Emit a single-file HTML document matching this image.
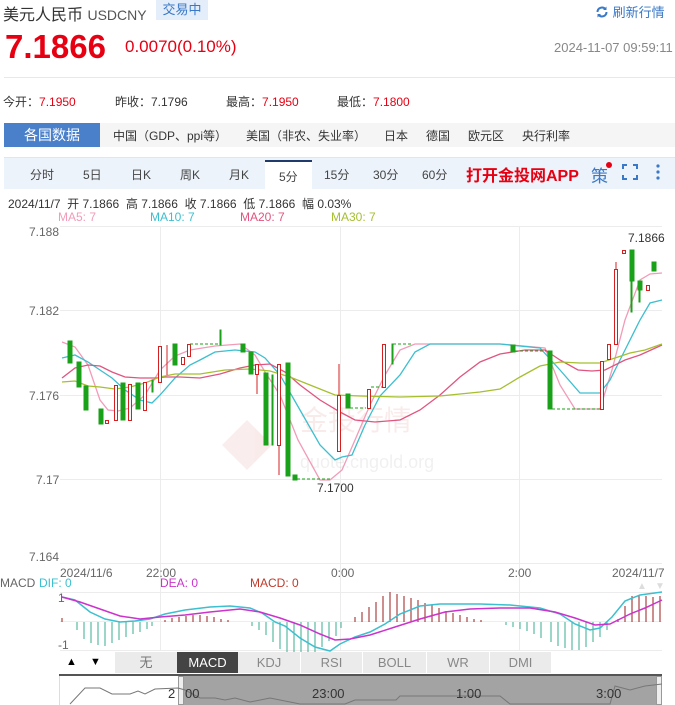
<!DOCTYPE html>
<html><head><meta charset="utf-8"><style>
*{margin:0;padding:0;box-sizing:border-box}
body{width:675px;height:705px;overflow:hidden;background:#fff;font-family:"Liberation Sans","Noto Sans CJK SC",sans-serif;color:#333;position:relative}
.a{position:absolute;white-space:nowrap}
</style></head><body>
<div class="a" style="left:3px;top:1px;font-size:16px;color:#333">美元人民币 <span style="font-size:14px;color:#555">USDCNY</span></div>
<div class="a" style="left:156px;top:0;height:20px;width:52px;background:#e4eefa;color:#3a78c8;font-size:13px;line-height:20px;text-align:center">交易中</div>
<div class="a" style="left:595px;top:2px;font-size:13px;color:#3a78c8"><svg width="14" height="14" viewBox="0 0 14 14" style="vertical-align:-2px"><path d="M2.5 7a4.5 4.5 0 0 1 8-2.8M11.5 7a4.5 4.5 0 0 1-8 2.8" fill="none" stroke="#3a78c8" stroke-width="2"/><path d="M11.5 1.5v3.5h-3.5zM2.5 12.5v-3.5h3.5z" fill="#3a78c8"/></svg> 刷新行情</div>
<div class="a" style="left:5px;top:28px;font-size:33px;font-weight:bold;color:#e60012">7.1866</div>
<div class="a" style="left:125px;top:37px;font-size:17px;color:#e60012">0.0070(0.10%)</div>
<div class="a" style="left:554px;top:40px;font-size:13px;color:#888">2024-11-07 09:59:11</div>
<div class="a" style="left:4px;top:77px;width:671px;height:1px;background:#e8e8e8"></div>
<div class="a" style="left:3px;top:93px;font-size:12px">今开：<span style="color:#e60012">7.1950</span></div>
<div class="a" style="left:115px;top:93px;font-size:12px">昨收：7.1796</div>
<div class="a" style="left:226px;top:93px;font-size:12px">最高：<span style="color:#e60012">7.1950</span></div>
<div class="a" style="left:337px;top:93px;font-size:12px">最低：<span style="color:#e60012">7.1800</span></div>
<div class="a" style="left:4px;top:123px;width:671px;height:24px;background:#f5f5f5"></div>
<div class="a" style="left:4px;top:123px;width:96px;height:24px;background:#4a7fc9;color:#fff;font-size:14px;line-height:24px;text-align:center">各国数据</div>
<div class="a" style="left:113px;top:127px;font-size:12px">中国（GDP、ppi等）</div>
<div class="a" style="left:246px;top:127px;font-size:12px">美国（非农、失业率）</div>
<div class="a" style="left:384px;top:127px;font-size:12px">日本</div>
<div class="a" style="left:426px;top:127px;font-size:12px">德国</div>
<div class="a" style="left:468px;top:127px;font-size:12px">欧元区</div>
<div class="a" style="left:522px;top:127px;font-size:12px">央行利率</div>
<div class="a" style="left:4px;top:157px;width:671px;height:32px;background:#edf3fb;border-top:1px solid #dde6f2"></div>
<div class="a" style="left:265px;top:160px;width:47px;height:29px;background:#fff;border-top:2px solid #1f3a6b"></div>
<div class="a" style="top:166px;left:30px;font-size:12px;color:#444">分时</div>
<div class="a" style="top:166px;left:83px;font-size:12px;color:#444">5日</div>
<div class="a" style="top:166px;left:131px;font-size:12px;color:#444">日K</div>
<div class="a" style="top:166px;left:180px;font-size:12px;color:#444">周K</div>
<div class="a" style="top:166px;left:229px;font-size:12px;color:#444">月K</div>
<div class="a" style="top:168px;left:279px;font-size:12px;color:#444">5分</div>
<div class="a" style="top:166px;left:324px;font-size:12px;color:#444">15分</div>
<div class="a" style="top:166px;left:373px;font-size:12px;color:#444">30分</div>
<div class="a" style="top:166px;left:422px;font-size:12px;color:#444">60分</div>
<div class="a" style="top:162px;left:466px;font-size:16px;font-weight:bold;color:#e60012">打开金投网APP</div>
<div class="a" style="top:162px;left:591px;font-size:17px;color:#3a78c8">策</div>
<div class="a" style="top:162px;left:606px;width:6px;height:6px;border-radius:3px;background:#e60012"></div>
<svg class="a" style="left:622px;top:164px" width="16" height="16"><path d="M1 5V1h4M11 1h4v4M15 11v4h-4M5 15H1v-4" fill="none" stroke="#3a78c8" stroke-width="2"/></svg>
<svg class="a" style="left:655px;top:164px" width="6" height="16"><circle cx="3" cy="2" r="1.6" fill="#3a78c8"/><circle cx="3" cy="8" r="1.6" fill="#3a78c8"/><circle cx="3" cy="14" r="1.6" fill="#3a78c8"/></svg>
<div class="a" style="left:8px;top:195px;font-size:12px;color:#333">2024/11/7 &nbsp;开 7.1866 &nbsp;高 7.1866 &nbsp;收 7.1866 &nbsp;低 7.1866 &nbsp;幅 0.03%</div>
<div class="a" style="left:58px;top:210px;font-size:12px;color:#f29bb7">MA5: 7</div>
<div class="a" style="left:150px;top:210px;font-size:12px;color:#3cbfcf">MA10: 7</div>
<div class="a" style="left:240px;top:210px;font-size:12px;color:#e0557f">MA20: 7</div>
<div class="a" style="left:331px;top:210px;font-size:12px;color:#a5bf2f">MA30: 7</div>

<svg class="a" style="left:0;top:0" width="675" height="705" font-family="Liberation Sans,sans-serif" font-size="12">
<g stroke="#ececec" stroke-width="1">
<line x1="60" y1="226.5" x2="662" y2="226.5"/><line x1="60" y1="310.5" x2="662" y2="310.5"/><line x1="60" y1="395.5" x2="662" y2="395.5"/><line x1="60" y1="479.5" x2="662" y2="479.5"/><line x1="60" y1="563.5" x2="662" y2="563.5"/>
<line x1="160.5" y1="226" x2="160.5" y2="650"/><line x1="340.5" y1="226" x2="340.5" y2="650"/><line x1="519.5" y1="226" x2="519.5" y2="650"/>
<line x1="60" y1="592.5" x2="662" y2="592.5"/><line x1="60" y1="650.5" x2="662" y2="650.5"/>
</g>
<g fill="#666"><text x="29" y="236">7.188</text><text x="29" y="315">7.182</text><text x="29" y="400">7.176</text><text x="36" y="484">7.17</text><text x="29" y="561">7.164</text>
<text x="60" y="577">2024/11/6</text><text x="146" y="577">22:00</text><text x="331" y="577">0:00</text><text x="508" y="577">2:00</text><text x="612" y="577">2024/11/7</text></g>
<text x="628" y="242" fill="#333">7.1866</text>
<text x="317" y="492" fill="#333">7.1700</text>
<g opacity="0.09"><path d="M222 445l25-25 25 25-25 25z" fill="#c33"/><text x="300" y="430" font-size="28" fill="#c33">金投行情</text><text x="300" y="468" font-size="18" fill="#666">quote.cngold.org</text></g>
<polyline fill="none" stroke="#f29bb7" stroke-width="1.3" points="62,342 75,347 88,365 100,400 108,410 118,411 130,408 145,395 160,370 175,356 190,350 215,346 240,344 255,355 265,372 280,395 298,440 320,480 330,480 342,470 355,440 370,405 385,375 400,350 415,344 500,344 545,348 560,385 575,409 600,409 612,370 625,320 640,280 650,274 662,273"/>
<polyline fill="none" stroke="#3cbfcf" stroke-width="1.3" points="62,358 75,355 88,362 100,370 112,378 125,390 140,400 152,403 160,395 175,378 190,365 200,360 215,352 235,350 255,352 265,358 280,375 300,410 320,445 335,460 342,457 352,455 365,425 380,396 400,375 415,352 430,344 500,344 540,348 560,370 580,393 600,393 610,380 625,350 640,320 650,303 662,300"/>
<polyline fill="none" stroke="#e0557f" stroke-width="1.3" points="62,378 75,368 88,365 100,366 112,372 125,377 140,378 155,378 165,377 180,377 200,378 220,374 240,368 255,365 270,364 285,372 300,385 320,400 340,412 355,420 375,422 400,420 420,410 440,395 460,377 480,362 500,354 525,350 545,350 560,360 578,370 592,371 605,370 625,360 640,355 662,345"/>
<polyline fill="none" stroke="#a5bf2f" stroke-width="1.3" points="62,382 75,381 88,386 100,387 115,389 130,387 145,383 160,377 175,374 200,374 225,370 250,369 270,371 290,377 310,385 335,395 360,396 400,397 440,396 480,392 500,389 520,377 540,366 560,362 580,363 600,363 615,358 630,353 645,350 662,344"/>
<g fill="#1aa11a" stroke="#1aa11a">
<rect x="68" y="341" width="4" height="22"/><rect x="77" y="362" width="4" height="25"/><rect x="84" y="386" width="4" height="24"/><rect x="99" y="409" width="4" height="15"/><rect x="121" y="383" width="4" height="37"/><rect x="136" y="383" width="4" height="26"/><rect x="152" y="380" width="1" height="12"/><rect x="173" y="344" width="4" height="21"/><rect x="241" y="344" width="4" height="8"/><rect x="249" y="352" width="4" height="22"/><rect x="264" y="373" width="4" height="72"/><rect x="272" y="375" width="1" height="70"/><rect x="286" y="363" width="4" height="113"/><rect x="293" y="475" width="4" height="5"/><rect x="346" y="394" width="4" height="14"/><rect x="392" y="344" width="1" height="20"/><rect x="511" y="345" width="4" height="7"/><rect x="548" y="351" width="4" height="58"/><rect x="630" y="250" width="4" height="31"/><rect x="631" y="281" width="1" height="31"/><rect x="638" y="281" width="4" height="9"/><rect x="639" y="290" width="1" height="12"/><rect x="652" y="262" width="4" height="9"/><rect x="220" y="330" width="1" height="15"/>
</g>
<g fill="#fff" stroke="#d42020">
<rect x="105.5" y="420.5" width="3" height="3"/><rect x="114.5" y="385.5" width="3" height="35"/><rect x="128.5" y="384.5" width="3" height="36"/><rect x="143.5" y="382.5" width="3" height="28"/><rect x="158.5" y="346.5" width="3" height="36"/><line x1="167" y1="345" x2="167" y2="375"/><rect x="181.5" y="357.5" width="3" height="7"/><rect x="187.5" y="344.5" width="3" height="12"/><rect x="255.5" y="364.5" width="3" height="10"/><line x1="257" y1="374" x2="257" y2="394"/><rect x="277.5" y="364.5" width="3" height="81"/><line x1="279" y1="445" x2="279" y2="475"/><rect x="337.5" y="395.5" width="3" height="56"/><line x1="339" y1="364" x2="339" y2="395"/><rect x="367.5" y="389.5" width="3" height="19"/><rect x="382.5" y="344.5" width="3" height="43"/><rect x="600.5" y="361.5" width="3" height="48"/><rect x="607.5" y="344.5" width="3" height="15"/><rect x="614.5" y="269.5" width="3" height="75"/><line x1="616" y1="262" x2="616" y2="269"/><rect x="622.5" y="250.5" width="3" height="3"/><rect x="646.5" y="285.5" width="3" height="5"/>
</g>
<g stroke="#1aa11a" stroke-dasharray="3,2"><line x1="100" y1="424" x2="105" y2="424"/><line x1="190" y1="344" x2="218" y2="344"/><line x1="297" y1="479" x2="330" y2="479"/><line x1="350" y1="408" x2="366" y2="408"/><line x1="371" y1="387" x2="382" y2="387"/><line x1="393" y1="344" x2="413" y2="344"/><line x1="515" y1="351" x2="546" y2="351"/><line x1="552" y1="409" x2="600" y2="409"/></g>
<text x="0" y="587" fill="#666">MACD</text><text x="39" y="587" fill="#3cbfcf">DIF: 0</text><text x="160" y="587" fill="#cc33cc">DEA: 0</text><text x="250" y="587" fill="#c0392b">MACD: 0</text>
<text x="637" y="589" fill="#ddd" font-size="10">▲</text><text x="655" y="589" fill="#ddd" font-size="10">▼</text>
<text x="58" y="602" fill="#666">1</text><text x="58" y="649" fill="#666">-1</text>
<line x1="60" y1="621.5" x2="662" y2="621.5" stroke="#eee"/>
<g stroke="#3aae8e" stroke-width="1">
<path d="M77 622v8M84 622v17M91 622v21M98 622v23M105 622v24M112 622v21M119 622v18M126 622v15M133 622v12M140 622v10M147 622v7M152 622v4M252 622v4M259 622v8M266 622v13M273 622v20M280 622v27M287 622v32M294 622v35M301 622v36M308 622v34M315 622v30M322 622v25M329 622v19M336 622v14M341 622v6M506 622v3M513 622v5M520 622v7M527 622v9M534 622v12M541 622v16M551 622v20M558 622v24M565 622v26M572 622v28M579 622v28M586 622v25M593 622v20M600 622v15M607 622v8"/>
</g>
<g stroke="#9b1c1c" stroke-width="1">
<path d="M62 622v-4M165 622v-2M172 622v-4M179 622v-5M186 622v-6M193 622v-7M200 622v-7M207 622v-6M214 622v-5M221 622v-3M228 622v-2M355 622v-5M362 622v-10M369 622v-15M376 622v-20M383 622v-26M390 622v-30M397 622v-28M404 622v-26M411 622v-24M418 622v-22M425 622v-19M432 622v-17M439 622v-14M446 622v-11M453 622v-9M460 622v-7M467 622v-5M474 622v-3M481 622v-2M618 622v-3M625 622v-16M632 622v-26M639 622v-26M646 622v-26M653 622v-25M660 622v-26"/>
</g>
<polyline fill="none" stroke="#3cbfcf" stroke-width="1.5" points="62,597 75,600 90,612 105,619 120,622 135,621 150,619 165,614 185,610 210,607 230,606 250,608 262,613 275,622 285,626 300,638 315,647 330,651 340,644 355,637 370,632 385,624 400,614 420,606 440,604 480,604 510,605 540,608 560,614 575,624 590,630 600,628 612,617 625,601 640,595 662,592"/>
<polyline fill="none" stroke="#cc33cc" stroke-width="1.5" points="62,597 80,602 100,609 120,616 140,619 160,617 185,615 210,612 240,609 260,612 280,618 300,625 320,634 335,640 350,639 370,635 395,627 420,619 445,612 470,609 500,608 530,608 555,612 575,618 595,625 610,624 630,614 645,608 662,600"/>
</svg>
<div class="a" style="left:59px;top:652px;width:25px;height:21px;font-size:11px;line-height:21px;text-align:center;color:#000">▲</div>
<div class="a" style="left:84px;top:652px;width:23px;height:21px;font-size:11px;line-height:21px;text-align:center;color:#000">▼</div>
<div class="a" style="left:115px;top:652px;width:436px;height:21px;background:#ebebeb"></div>
<div class="a" style="left:115px;top:652px;width:62px;height:21px;font-size:13px;line-height:21px;text-align:center;color:#777">无</div>
<div class="a" style="left:177px;top:652px;width:61px;height:21px;font-size:13px;line-height:21px;text-align:center;color:#fff;background:#444">MACD</div>
<div class="a" style="left:238px;top:652px;width:63px;height:21px;font-size:13px;line-height:21px;text-align:center;color:#888;border-right:1px solid #fff">KDJ</div>
<div class="a" style="left:301px;top:652px;width:62px;height:21px;font-size:13px;line-height:21px;text-align:center;color:#888;border-right:1px solid #fff">RSI</div>
<div class="a" style="left:363px;top:652px;width:64px;height:21px;font-size:13px;line-height:21px;text-align:center;color:#888;border-right:1px solid #fff">BOLL</div>
<div class="a" style="left:427px;top:652px;width:63px;height:21px;font-size:13px;line-height:21px;text-align:center;color:#888;border-right:1px solid #fff">WR</div>
<div class="a" style="left:490px;top:652px;width:61px;height:21px;font-size:13px;line-height:21px;text-align:center;color:#888">DMI</div>
<div class="a" style="left:59px;top:674px;width:603px;height:2px;background:#555"></div>
<div class="a" style="left:59px;top:676px;width:1px;height:29px;background:#ddd"></div>
<div class="a" style="left:178px;top:676px;width:484px;height:29px;background:#a3a3a3"></div>
<div class="a" style="left:178px;top:676px;width:6px;height:29px;background:#eee;border:1px solid #999"></div>
<div class="a" style="left:656px;top:676px;width:6px;height:29px;background:#eee;border:1px solid #999"></div>
<svg class="a" style="left:0;top:676px" width="675" height="29"><polyline fill="none" stroke="#777" points="70,28 85,12 100,12 112,18 130,18 138,15 145,18 155,13 178,12 185,14 200,22 215,22 225,24 235,22 250,26 270,22 300,28 345,28 355,24 396,24 400,20 470,20 500,20 510,28 610,28 615,10 630,14 645,10 662,8"/>
<g fill="#333" font-family="Liberation Sans,sans-serif" font-size="13"><text x="168" y="22">2</text><text x="185" y="22">00</text><text x="312" y="22">23:00</text><text x="456" y="22">1:00</text><text x="596" y="22">3:00</text></g></svg>
</body></html>
